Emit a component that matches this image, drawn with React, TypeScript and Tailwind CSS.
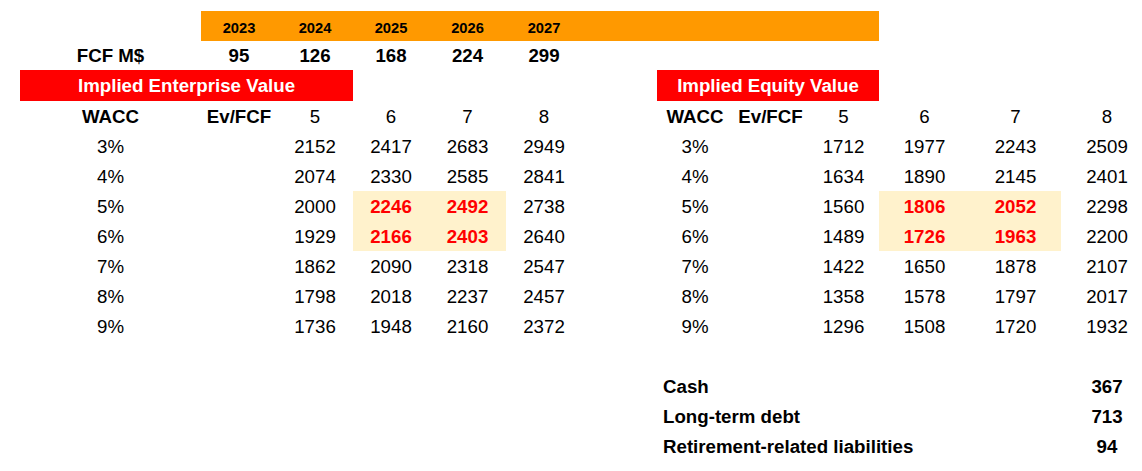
const grid =
  "grid grid-cols-[20px_181px_76px_76px_76px_77px_76px_75px_76px_75px_71px_91px_91px_92px]";

const years = ["2023", "2024", "2025", "2026", "2027"];
const fcf = [95, 126, 168, 224, 299];

const rows = [
  { wacc: "3%", ev: [2152, 2417, 2683, 2949], eq: [1712, 1977, 2243, 2509] },
  { wacc: "4%", ev: [2074, 2330, 2585, 2841], eq: [1634, 1890, 2145, 2401] },
  { wacc: "5%", ev: [2000, 2246, 2492, 2738], eq: [1560, 1806, 2052, 2298] },
  { wacc: "6%", ev: [1929, 2166, 2403, 2640], eq: [1489, 1726, 1963, 2200] },
  { wacc: "7%", ev: [1862, 2090, 2318, 2547], eq: [1422, 1650, 1878, 2107] },
  { wacc: "8%", ev: [1798, 2018, 2237, 2457], eq: [1358, 1578, 1797, 2017] },
  { wacc: "9%", ev: [1736, 1948, 2160, 2372], eq: [1296, 1508, 1720, 1932] },
];

const balance = [
  { label: "Cash", value: 367 },
  { label: "Long-term debt", value: 713 },
  { label: "Retirement-related liabilities", value: 94 },
];

function Cell({ className = "", children }: { className?: string; children?: React.ReactNode }) {
  return <div className={`flex h-full items-center justify-center pt-[2px] leading-none ${className}`}>{children}</div>;
}

// highlighted cells: middle two multiples, WACC 5% and 6%
function Value({ v, hot }: { v: number; hot: boolean }) {
  return hot ? (
    <Cell className="bg-[#fff2cc] font-bold text-[#ff0000]">{v}</Cell>
  ) : (
    <Cell>{v}</Cell>
  );
}

export default function App() {
  return (
    <div className="h-[471px] w-[1142px] overflow-hidden bg-white font-['Liberation_Sans',Arial,sans-serif] text-[18.7px] text-black">
      <div className="h-[11px]" />

      <div className={`${grid} h-[30px]`}>
        {years.map((y, i) => (
          <Cell key={y} className={`bg-[#ff9900] !pt-[4px] text-[14.7px] font-bold ${i === 0 ? "col-start-3" : ""}`}>
            {y}
          </Cell>
        ))}
        <div className="col-span-4 bg-[#ff9900]" />
      </div>

      <div className={`${grid} h-[29px] font-bold`}>
        <Cell className="col-start-2">FCF M$</Cell>
        {fcf.map((v) => (
          <Cell key={v}>{v}</Cell>
        ))}
      </div>

      <div className={`${grid} h-[31px] font-bold text-white`}>
        <Cell className="col-span-3 col-start-2 bg-[#ff0000]">Implied Enterprise Value</Cell>
        <Cell className="col-span-3 col-start-9 bg-[#ff0000]">Implied Equity Value</Cell>
      </div>

      <div className={`${grid} h-[30px]`}>
        <Cell className="col-start-2 font-bold">WACC</Cell>
        <Cell className="font-bold">Ev/FCF</Cell>
        <Cell>5</Cell>
        <Cell>6</Cell>
        <Cell>7</Cell>
        <Cell>8</Cell>
        <Cell className="col-start-9 font-bold">WACC</Cell>
        <Cell className="font-bold">Ev/FCF</Cell>
        <Cell>5</Cell>
        <Cell>6</Cell>
        <Cell>7</Cell>
        <Cell>8</Cell>
      </div>

      {rows.map((r, ri) => {
        const hotRow = ri === 2 || ri === 3;
        return (
          <div key={r.wacc} className={`${grid} h-[30px]`}>
            <Cell className="col-start-2">{r.wacc}</Cell>
            {r.ev.map((v, ci) => (
              <div key={ci} className={ci === 0 ? "col-start-4" : ""}>
                <Value v={v} hot={hotRow && (ci === 1 || ci === 2)} />
              </div>
            ))}
            <Cell className="col-start-9">{r.wacc}</Cell>
            {r.eq.map((v, ci) => (
              <div key={ci} className={ci === 0 ? "col-start-11" : ""}>
                <Value v={v} hot={hotRow && (ci === 1 || ci === 2)} />
              </div>
            ))}
          </div>
        );
      })}

      <div className="h-[30px]" />

      {balance.map((b) => (
        <div key={b.label} className={`${grid} h-[30px] font-bold`}>
          <div className="col-span-5 col-start-9 flex items-center pl-[6px] pt-[2px] leading-none">{b.label}</div>
          <Cell>{b.value}</Cell>
        </div>
      ))}
    </div>
  );
}
